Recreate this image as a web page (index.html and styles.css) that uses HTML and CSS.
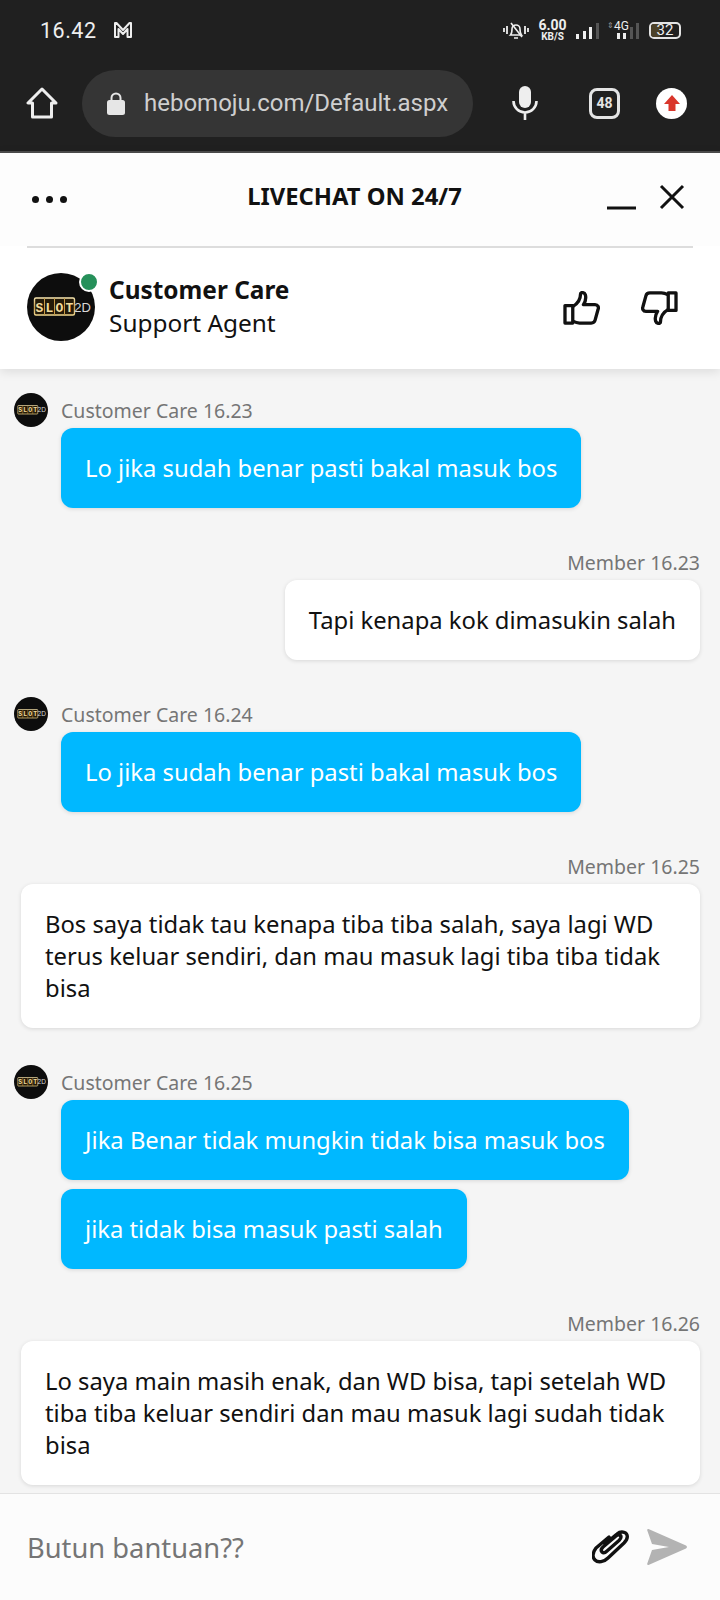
FILE: index.html
```html
<!DOCTYPE html>
<html lang="en">
<head>
  <meta charset="UTF-8" />
  <meta name="viewport" content="width=device-width, initial-scale=1.0" />
  <title>Livechat</title>
  <link rel="stylesheet" href="styles.css">
</head>
<body>
  <!-- Shared logo -->
  <svg class="defs" width="0" height="0">
    <defs>
      <linearGradient id="gold" x1="0" y1="0" x2="0" y2="1">
        <stop offset="0" stop-color="#f7e6b0" />
        <stop offset="0.55" stop-color="#c79a45" />
        <stop offset="1" stop-color="#f2d98f" />
      </linearGradient>
      <symbol id="logo" viewBox="0 0 68 68">
        <circle cx="34" cy="34" r="34" fill="#0d0d0d" />
        <rect x="7.5" y="25" width="40" height="17" rx="1.5" fill="#241a08" stroke="url(#gold)" stroke-width="1.4" />
        <path d="M17.500 25v17M27.500 25v17M37.500 25v17" stroke="#c79a45" stroke-width="1" />
        <g class="logo-text">
          <text x="12.5" y="38.5" fill="#f2dc9c">S</text>
          <text x="22.5" y="38.5" fill="#f2dc9c">L</text>
          <text x="32.5" y="38.5" fill="#f2dc9c">O</text>
          <text x="42.5" y="38.5" fill="#f2dc9c">T</text>
          <text x="55.5" y="38.5" fill="#d8d8d8">2D</text>
        </g>
      </symbol>
    </defs>
  </svg>

  <!-- Phone status bar -->
  <div class="status-bar">
    <div class="status-left">
      <span class="clock">16.42</span>
      <svg class="ic-mail" width="20" height="18" viewBox="0 0 20 18" fill="none" stroke="#eee" stroke-width="2" stroke-linejoin="round"><path d="M2 16V2h1.500L10 9l6.500-7H18v14h-3.500V8L10 13 5.500 8v8z"/></svg>
    </div>
    <div class="status-right">
      <svg width="26" height="20" viewBox="0 0 26 20" fill="none" stroke="#eee" stroke-width="1.6"><path d="M1 8v4M4 6v8M22 6v8M25 8v4" stroke-width="1.800"/><path d="M7.500 15c1.500-1.500 1.500-3 1.500-6a4 4 0 0 1 8 0c0 3 0 4.500 1.500 6z"/><path d="M8 3l11 14M11 18h4"/></svg>
      <div class="speed"><span class="speed-num">6.00</span><span class="speed-unit">KB/S</span></div>
      <div class="signal">
        <i class="bar b1"></i><i class="bar b2"></i><i class="bar b3"></i><i class="bar b4 off"></i>
      </div>
      <div class="signal signal-4g">
        <span class="net-arrows">⇕</span>
        <span class="net-label">4G</span>
        <i class="bar b1 low"></i><i class="bar b2 low"></i><i class="bar b3 off"></i><i class="bar b4 off"></i>
      </div>
      <div class="battery"><span class="battery-fill"></span><span class="battery-num">32</span></div>
    </div>
  </div>

  <!-- Browser toolbar -->
  <div class="toolbar">
    <svg class="ic-home" width="32" height="32" viewBox="0 0 32 32" fill="none" stroke="#eee" stroke-width="3" stroke-linejoin="round"><path d="M16 2 2 16h4.500v14h19V16H30z"/></svg>
    <div class="url-pill">
      <svg width="18" height="23" viewBox="0 0 18 23"><path d="M4.500 9V6a4.500 4.500 0 0 1 9 0v3" fill="none" stroke="#e6e6e6" stroke-width="2"/><rect y="8" width="18" height="15" rx="2.500" fill="#e6e6e6"/></svg>
      <span class="url-text">hebomoju.com/Default.aspx</span>
    </div>
    <svg class="ic-mic" width="26" height="34" viewBox="0 0 26 34" fill="none" stroke="#eee" stroke-width="2.600"><rect x="7" y="0" width="12" height="22" rx="6" fill="#eee" stroke="none"/><path d="M1.500 15a11.500 11.500 0 0 0 23 0M13 26.500V34"/></svg>
    <div class="tab-count">48</div>
    <div class="update-btn">
      <svg width="18" height="18" viewBox="0 0 18 18"><path d="M9 1 17 10h-4.500v7h-7v-7H1z" fill="#d9362b"/></svg>
    </div>
  </div>

  <!-- Chat window header -->
  <header class="chat-head">
    <div class="title-row">
      <div class="dots"><i></i><i></i><i></i></div>
      <div class="chat-title">LIVECHAT ON 24/7</div>
      <div class="win-btns">
        <svg width="29" height="6" viewBox="0 0 29 6"><path d="M0 3h29" stroke="#111" stroke-width="3"/></svg>
        <svg width="26" height="26" viewBox="0 0 26 26"><path d="M2 2l22 22M24 2 2 24" stroke="#111" stroke-width="3"/></svg>
      </div>
    </div>
    <div class="agent-row">
      <div class="agent-avatar">
        <svg width="68" height="68"><use href="#logo" /></svg>
        <span class="online-dot"></span>
      </div>
      <div class="agent-info">
        <div class="agent-name">Customer Care</div>
        <div class="agent-role">Support Agent</div>
      </div>
      <div class="rate-btns">
        <svg width="37" height="34" viewBox="0 0 38 35" fill="none" stroke="#111" stroke-width="3.400" stroke-linejoin="round"><path d="M2 15h8v18H2z"/><path d="M10 16c5-3 8-8 8-13 0-2 4-2 5 1 1 4 0 7-2 10h12c3 0 4 3 3 5l-3 11c-.5 2-2 3-4 3H17c-3 0-5-1-7-2"/></svg>
        <svg width="37" height="34" viewBox="0 0 38 35" fill="none" stroke="#111" stroke-width="3.400" stroke-linejoin="round"><path d="M36 20h-8V2h8z"/><path d="M28 19c-5 3-8 8-8 13 0 2-4 2-5-1-1-4 0-7 2-10H5c-3 0-4-3-3-5L5 5c.5-2 2-3 4-3h12c3 0 5 1 7 2"/></svg>
      </div>
    </div>
  </header>

  <!-- Messages -->
  <main class="messages">
    <div class="msg-group agent">
      <svg class="msg-avatar" width="34" height="34"><use href="#logo" /></svg>
      <div class="msg-body">
        <div class="msg-meta">Customer Care 16.23</div>
        <div class="bubble">Lo jika sudah benar pasti bakal masuk bos</div>
      </div>
    </div>

    <div class="msg-group member">
      <div class="msg-body">
        <div class="msg-meta">Member 16.23</div>
        <div class="bubble">Tapi kenapa kok dimasukin salah</div>
      </div>
    </div>

    <div class="msg-group agent">
      <svg class="msg-avatar" width="34" height="34"><use href="#logo" /></svg>
      <div class="msg-body">
        <div class="msg-meta">Customer Care 16.24</div>
        <div class="bubble">Lo jika sudah benar pasti bakal masuk bos</div>
      </div>
    </div>

    <div class="msg-group member">
      <div class="msg-body">
        <div class="msg-meta">Member 16.25</div>
        <div class="bubble">Bos saya tidak tau kenapa tiba tiba salah, saya lagi WD terus keluar sendiri, dan mau masuk lagi tiba tiba tidak bisa</div>
      </div>
    </div>

    <div class="msg-group agent">
      <svg class="msg-avatar" width="34" height="34"><use href="#logo" /></svg>
      <div class="msg-body">
        <div class="msg-meta">Customer Care 16.25</div>
        <div class="bubble">Jika Benar tidak mungkin tidak bisa masuk bos</div>
        <div class="bubble">jika tidak bisa masuk pasti salah</div>
      </div>
    </div>

    <div class="msg-group member">
      <div class="msg-body">
        <div class="msg-meta">Member 16.26</div>
        <div class="bubble">Lo saya main masih enak, dan WD bisa, tapi setelah WD tiba tiba keluar sendiri dan mau masuk lagi sudah tidak bisa</div>
      </div>
    </div>
  </main>

  <!-- Input -->
  <footer class="composer">
    <div class="composer-input">Butun bantuan??</div>
    <svg class="ic-clip" width="38" height="34" viewBox="0 0 38 34" fill="none" stroke="#111" stroke-width="3.400" stroke-linecap="round" stroke-linejoin="round"><path d="M13 14 25 4c4-3.500 9-2 10 1 1 3 0 5-3 8L16 28c-4 4-10 5-13 2-3-3-2-8 1-12L17 7"/><path d="M10 22c-1-1-1-3 1-5L24 6c2-2 5-1 5 1 0 1-.5 2-2 3.500L15 21c-2 2-4 2-5 1z"/></svg>
    <svg class="ic-send" width="40" height="38" viewBox="0 0 40 38"><path d="M1.500 1 39 17.500c1.300.7 1.300 2.300 0 3L1.500 37c-.8.300-1.500-.3-1.300-1.200L5 22l17-3L5 16 .2 2.200C0 1.300.7.700 1.500 1z" fill="#b3b3b3"/></svg>
  </footer>
</body>
</html>
```

FILE: styles.css
```css
* {
  box-sizing: border-box;
}

html, body {
  margin: 0;
  padding: 0;
}

body {
  width: 720px;
  height: 1600px;
  overflow: hidden;
  display: flex;
  flex-direction: column;
  background: #f5f5f5;
  font-family: "Noto Sans", sans-serif;
  color: #111;
}

.defs {
  position: absolute;
}

.logo-text text {
  font-family: "Liberation Mono", monospace;
  font-size: 13px;
  font-weight: 700;
  text-anchor: middle;
}

.logo-text text:last-child {
  font-family: "Liberation Sans", sans-serif;
  font-size: 13px;
  font-weight: 400;
}

/* status bar */
.status-bar {
  height: 60px;
  flex: none;
  background: #202020;
  color: #eee;
  display: flex;
  align-items: center;
  justify-content: space-between;
  padding: 0 39px 0 40px;
  font-family: Roboto, sans-serif;
}

.status-left {
  display: flex;
  align-items: center;
  gap: 16px;
}

.clock {
  font-size: 21.5px;
  letter-spacing: 0.5px;
}

.status-right {
  display: flex;
  align-items: center;
  gap: 8px;
}

.speed {
  display: flex;
  flex-direction: column;
  align-items: center;
  gap: 1px;
  width: 31px;
  font-weight: 700;
}

.speed-num {
  font-size: 14px;
  line-height: 12px;
}

.speed-unit {
  font-size: 10px;
  line-height: 9px;
}

.signal {
  display: flex;
  align-items: flex-end;
  gap: 3.500px;
  height: 17px;
  width: 22px;
  position: relative;
}

.signal-4g {
  width: 31px;
  justify-content: flex-end;
  margin-left: 2px;
}

.bar {
  display: block;
  width: 3px;
  flex: none;
  background: #eee;
}

.bar.off {
  background: #555;
}

.b1 { height: 5px; }
.b2 { height: 8px; }
.b3 { height: 12px; }
.b4 { height: 16px; }

.bar.low { height: 6px; }

.net-label {
  position: absolute;
  left: 6px;
  top: -1px;
  font-size: 12px;
  line-height: 11px;
}

.net-arrows {
  position: absolute;
  left: -1px;
  top: -1px;
  font-family: "DejaVu Sans", sans-serif;
  font-size: 8px;
  line-height: 10px;
  color: #999;
}

.battery {
  width: 32px;
  height: 17px;
  margin-left: 2px;
  border: 2px solid #e4e4e4;
  border-radius: 5px;
  position: relative;
  font-size: 15px;
  line-height: 13px;
  text-align: center;
  overflow: hidden;
}

.battery-fill {
  position: absolute;
  left: 0;
  top: 0;
  bottom: 0;
  width: 9px;
  background: #4d4229;
}

.battery-num {
  position: relative;
}

/* browser toolbar */
.toolbar {
  height: 91px;
  flex: none;
  background: #202020;
  display: flex;
  align-items: center;
  padding: 0 33px 5px 26px;
}

.ic-home {
  flex: none;
}

.url-pill {
  width: 392px;
  height: 67px;
  margin-left: 24px;
  background: #353535;
  border-radius: 34px;
  display: flex;
  align-items: center;
  gap: 19px;
  padding-left: 25px;
}

.url-text {
  font-family: Roboto, sans-serif;
  font-size: 24px;
  color: #cfcfcf;
  white-space: nowrap;
}

.ic-mic {
  margin-left: 39px;
  flex: none;
}

.tab-count {
  width: 31px;
  height: 31px;
  margin-left: 51px;
  border: 3.500px solid #e4e4e4;
  border-radius: 8px;
  color: #e4e4e4;
  font-family: Roboto, sans-serif;
  font-size: 14px;
  font-weight: 700;
  line-height: 24px;
  text-align: center;
}

.update-btn {
  width: 31px;
  height: 31px;
  margin-left: 36px;
  background: #fff;
  border-radius: 50%;
  display: flex;
  align-items: center;
  justify-content: center;
}

/* chat header */
.chat-head {
  flex: none;
  height: 218px;
  background: #fff;
  border-top: 2px solid #4a4a4a;
  box-shadow: 0 3px 10px rgba(0, 0, 0, 0.1);
  position: relative;
}

.title-row {
  height: 93px;
  background: #fdfdfd;
  margin: 0;
  padding: 0 35px 0 32px;
  display: flex;
  align-items: flex-start;
  position: relative;
}

.title-row::after {
  content: "";
  position: absolute;
  left: 27px;
  right: 27px;
  bottom: -2px;
  height: 2px;
  background: #ddd;
}

.dots {
  display: flex;
  gap: 7px;
  margin-top: 43px;
  width: 34px;
}

.dots i {
  width: 7px;
  height: 7px;
  background: #111;
  border-radius: 50%;
  flex: none;
}

.chat-title {
  position: absolute;
  left: 0;
  right: 11px;
  top: 27px;
  text-align: center;
  font-size: 23.800px;
  font-weight: 700;
  line-height: 32px;
}

.win-btns {
  margin-left: auto;
  display: flex;
  gap: 23px;
  align-items: flex-start;
  padding-top: 31px;
}

.win-btns svg:first-child {
  margin-top: 21px;
}

.agent-row {
  height: 123px;
  padding: 0 42px 0 27px;
  display: flex;
  align-items: center;
  position: relative;
}

.agent-avatar {
  width: 68px;
  height: 68px;
  flex: none;
  position: relative;
  margin-top: -1px;
}

.agent-avatar svg {
  display: block;
}

.online-dot {
  position: absolute;
  right: -4px;
  top: -1px;
  width: 20px;
  height: 20px;
  background: #26905a;
  border: 2px solid #fff;
  border-radius: 50%;
  box-sizing: border-box;
}

.agent-info {
  margin: -3px 0 0 14px;
  line-height: 33px;
}

.agent-name {
  font-size: 24.400px;
  font-weight: 700;
}

.agent-role {
  font-size: 24.400px;
}

.rate-btns {
  margin: 0 0 0 auto;
  display: flex;
  gap: 41px;
}

/* messages */
.messages {
  flex: 1;
  min-height: 0;
  overflow: hidden;
  padding: 27px 20px 0 14px;
  display: flex;
  flex-direction: column;
  gap: 40px;
}

.msg-group {
  display: flex;
  flex: none;
}

.msg-group.member {
  justify-content: flex-end;
}

.msg-avatar {
  flex: none;
  margin: -3px 13px 0 0;
}

.msg-body {
  display: flex;
  flex-direction: column;
  gap: 9px;
}

.msg-group.member .msg-body {
  align-items: flex-end;
  max-width: 679px;
}

.msg-meta {
  font-size: 19.500px;
  line-height: 30px;
  color: #757575;
  margin-bottom: -7px;
}

.bubble {
  align-self: flex-start;
  padding: 24px;
  font-size: 23.800px;
  line-height: 32px;
  background: #fff;
  border-radius: 12px;
  box-shadow: 0 1px 4px rgba(0, 0, 0, 0.12);
}

.msg-group.member .bubble {
  align-self: flex-end;
}

.msg-group.agent .bubble {
  background: #00b8ff;
  color: #fff;
}

/* composer */
.composer {
  flex: none;
  height: 107px;
  background: #fcfcfc;
  border-top: 1px solid #e3e3e3;
  display: flex;
  align-items: center;
  padding: 0 33px 0 27px;
  position: relative;
}

.composer-input {
  font-size: 27.300px;
  color: #757575;
}

.ic-clip {
  margin-left: auto;
}

.ic-send {
  margin-left: 17px;
}
```
